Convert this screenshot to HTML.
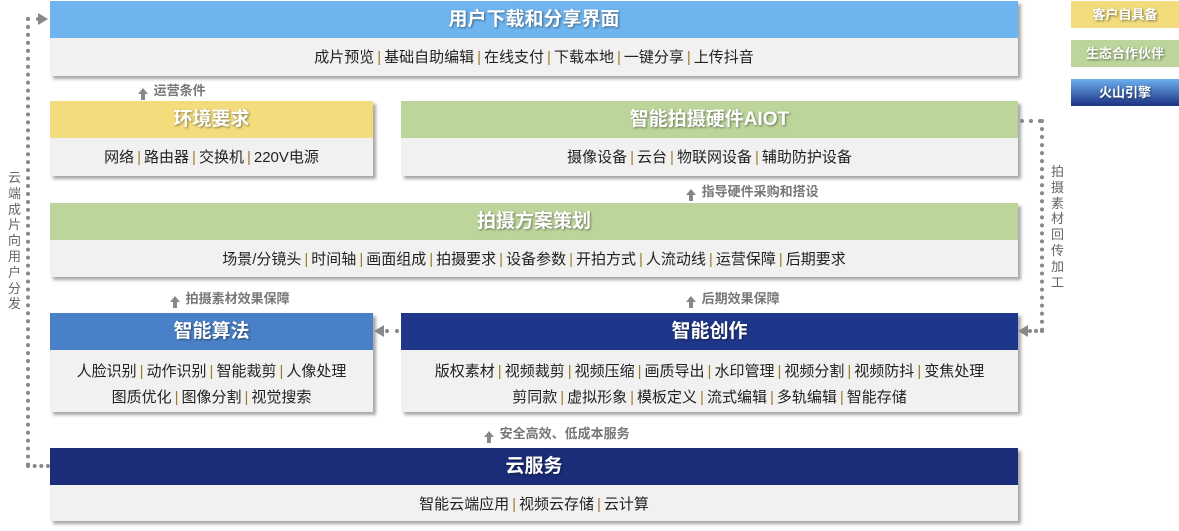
<!DOCTYPE html>
<html><head><meta charset="utf-8"><style>
*{margin:0;padding:0;box-sizing:border-box}
body{width:1179px;height:531px;background:#fff;position:relative;overflow:hidden;font-family:"Liberation Sans","Noto Sans CJK SC",sans-serif;}
.box{position:absolute;box-shadow:3px 3px 3px rgba(0,0,0,.35);background:#f1f1f1}
.hd{height:37px;line-height:37px;text-align:center;color:#fff;font-weight:bold;font-size:19px;text-shadow:1px 1px 2px rgba(0,0,0,.45)}
.bd{text-align:center;font-size:15px;color:#222;line-height:26px;padding-top:7px}
.bd i{font-style:normal;color:#a07a30;margin:0 3px}
.lab{position:absolute;font-size:13px;color:#777;font-weight:bold}
.lab b{display:inline-block;width:0;height:0;border-left:5px solid transparent;border-right:5px solid transparent;border-bottom:6px solid #888;position:relative;top:-1px;margin-right:2px}
.lab b:after{content:"";position:absolute;left:-2px;top:6px;width:4px;height:6px;background:#888}
.vt{position:absolute;font-size:13px;color:#666;width:14px;line-height:15.8px}
.dl{position:absolute;border:0 dotted #888}
.leg{position:absolute;left:1071px;width:108px;height:27px;line-height:27px;text-align:center;color:#fff;font-weight:bold;font-size:13px;text-shadow:1px 1px 2px rgba(0,0,0,.5)}
</style></head><body>

<div class="leg" style="top:1px;background:#f2dc7c">客户自具备</div>
<div class="leg" style="top:40px;background:#bcd59a">生态合作伙伴</div>
<div class="leg" style="top:79px;background:linear-gradient(#6cb0ee,#1c3182)">火山引擎</div>

<div class="box" style="left:50px;top:1px;width:968px;height:75px"><div class="hd" style="background:#6eb4ee">用户下载和分享界面</div><div class="bd">成片预览<i>|</i>基础自助编辑<i>|</i>在线支付<i>|</i>下载本地<i>|</i>一键分享<i>|</i>上传抖音</div></div>

<div class="lab" style="left:138px;top:80px"><b></b> 运营条件</div>

<div class="box" style="left:50px;top:101px;width:323px;height:75px"><div class="hd" style="background:#f2dc7c">环境要求</div><div class="bd">网络<i>|</i>路由器<i>|</i>交换机<i>|</i>220V电源</div></div>
<div class="box" style="left:401px;top:101px;width:617px;height:75px"><div class="hd" style="background:#bcd59a">智能拍摄硬件AIOT</div><div class="bd">摄像设备<i>|</i>云台<i>|</i>物联网设备<i>|</i>辅助防护设备</div></div>

<div class="lab" style="left:686px;top:181px"><b></b> 指导硬件采购和搭设</div>

<div class="box" style="left:50px;top:203px;width:968px;height:74px"><div class="hd" style="background:#bcd59a">拍摄方案策划</div><div class="bd">场景/分镜头<i>|</i>时间轴<i>|</i>画面组成<i>|</i>拍摄要求<i>|</i>设备参数<i>|</i>开拍方式<i>|</i>人流动线<i>|</i>运营保障<i>|</i>后期要求</div></div>

<div class="lab" style="left:170px;top:288px"><b></b> 拍摄素材效果保障</div>
<div class="lab" style="left:686px;top:288px"><b></b> 后期效果保障</div>

<div class="box" style="left:50px;top:313px;width:323px;height:99px"><div class="hd" style="background:#4a80c8">智能算法</div><div class="bd" style="padding-top:9px">人脸识别<i>|</i>动作识别<i>|</i>智能裁剪<i>|</i>人像处理<br>图质优化<i>|</i>图像分割<i>|</i>视觉搜索</div></div>
<div class="box" style="left:401px;top:313px;width:617px;height:99px"><div class="hd" style="background:#1f378a">智能创作</div><div class="bd" style="padding-top:9px">版权素材<i>|</i>视频裁剪<i>|</i>视频压缩<i>|</i>画质导出<i>|</i>水印管理<i>|</i>视频分割<i>|</i>视频防抖<i>|</i>变焦处理<br>剪同款<i>|</i>虚拟形象<i>|</i>模板定义<i>|</i>流式编辑<i>|</i>多轨编辑<i>|</i>智能存储</div></div>

<div class="lab" style="left:484px;top:423px"><b></b> 安全高效、低成本服务</div>

<div class="box" style="left:50px;top:448px;width:968px;height:73px"><div class="hd" style="background:#1b2c78">云服务</div><div class="bd">智能云端应用<i>|</i>视频云存储<i>|</i>云计算</div></div>

<div class="dl" style="left:26px;top:17px;width:4px;height:450px;border-left-width:4px"></div>
<div class="dl" style="left:26px;top:17px;width:14px;height:4px;border-top-width:4px"></div>
<div style="position:absolute;left:38px;top:13px;border-left:10px solid #888;border-top:6px solid transparent;border-bottom:6px solid transparent"></div>
<div class="dl" style="left:26px;top:464px;width:24px;height:4px;border-top-width:4px"></div>
<div class="vt" style="left:8px;top:170px">云端成片向用户分发</div>

<div class="dl" style="left:1020px;top:119px;width:22px;height:4px;border-top-width:4px"></div>
<div class="dl" style="left:1040px;top:119px;width:4px;height:213px;border-left-width:4px"></div>
<div class="dl" style="left:1028px;top:329px;width:16px;height:4px;border-top-width:4px"></div>
<div style="position:absolute;left:1018px;top:325px;border-right:10px solid #888;border-top:6px solid transparent;border-bottom:6px solid transparent"></div>
<div class="vt" style="left:1051px;top:164px">拍摄素材回传加工</div>

<div class="dl" style="left:385px;top:329px;width:14px;height:4px;border-top-width:4px"></div>
<div style="position:absolute;left:374px;top:325px;border-right:10px solid #888;border-top:6px solid transparent;border-bottom:6px solid transparent"></div>
</body></html>
